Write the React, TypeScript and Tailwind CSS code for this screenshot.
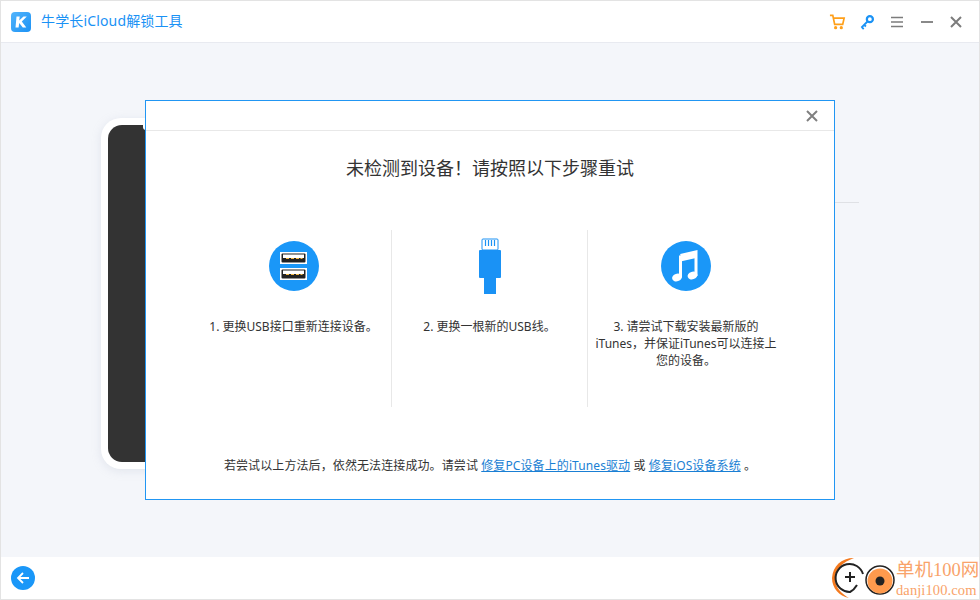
const font = "font-['Noto_Sans','Noto_Sans_CJK_SC',sans-serif]";

function Logo() {
  return (
    <svg width="20" height="20" viewBox="0 0 20 20">
      <defs>
        <linearGradient id="logoFill" x1="0" y1="0" x2="1" y2="1">
          <stop offset="0" stopColor="#52b4fb" />
          <stop offset="1" stopColor="#1c92f5" />
        </linearGradient>
      </defs>
      <rect width="20" height="20" rx="4" fill="url(#logoFill)" />
      <path d="M5.500 4.500h3.200L8.200 8.500 12.500 4.500h3.300l-5 5 4.500 6h-3.500L8.200 11l-.6 4.500H4.500z" fill="#fff" />
    </svg>
  );
}

function TitleIcons() {
  return (
    <div className="flex items-center">
      <svg width="17" height="18" viewBox="0 0 18 18" className="mr-[13px]" fill="none">
        <path d="M1 2h3l2 9.500h8.500L16 5H4.800" stroke="#ff9f18" strokeWidth="1.800" />
        <circle cx="7" cy="15" r="1.700" fill="#ff9f18" />
        <circle cx="13" cy="15" r="1.700" fill="#ff9f18" />
      </svg>
      <svg width="17" height="18" viewBox="0 0 18 18" className="mr-[14px]" fill="none">
        <circle cx="11.500" cy="6" r="3.200" stroke="#1a92f5" strokeWidth="2.400" />
        <path d="M9 8.500 2.500 15M3 14.500l2 2M5.500 12l1.800 1.800" stroke="#1a92f5" strokeWidth="2" />
      </svg>
      <svg width="14" height="14" viewBox="0 0 14 14" className="mr-[16px]">
        <path d="M1 2.500h12M1 7h12M1 11.500h12" stroke="#7c7c7c" strokeWidth="1.700" />
      </svg>
      <svg width="14" height="14" viewBox="0 0 14 14" className="mr-[15px]">
        <path d="M1 7h12" stroke="#7c7c7c" strokeWidth="1.800" />
      </svg>
      <svg width="14" height="14" viewBox="0 0 14 14">
        <path d="M2 2l10 10M12 2 2 12" stroke="#7c7c7c" strokeWidth="2" />
      </svg>
    </div>
  );
}

function UsbPortIcon() {
  const slot = (y: number) => (
    <g key={y}>
      <rect x="11" y={y} width="27" height="12" fill="#fff" />
      <rect x="12.500" y={y + 1.500} width="24" height="9" rx="1" fill="#222" />
      <rect x="14" y={y + 2.500} width="21" height="3.500" fill="#fff" />
      <path d={`M17 ${y + 6.500}h3M22 ${y + 6.500}h3M27 ${y + 6.500}h3M31.500 ${y + 6.500}h2`} stroke="#f5b942" strokeWidth="1" />
    </g>
  );
  return (
    <svg width="50" height="50" viewBox="0 0 50 50">
      <circle cx="25" cy="25" r="25" fill="#1a97f8" />
      {slot(11)}
      {slot(27)}
    </svg>
  );
}

function LightningIcon() {
  return (
    <svg width="24" height="56" viewBox="0 0 24 56" fill="none">
      <rect x="4" y="1" width="16" height="11" stroke="#1a92f5" strokeWidth="1" rx="1" />
      <path d="M7.500 2v6M10.500 2v6M13.500 2v6M16.500 2v6" stroke="#1a92f5" strokeWidth="1.200" />
      <rect x="1" y="12" width="22" height="28" rx="1" fill="#1a92f5" />
      <rect x="6" y="40" width="12" height="16" fill="#1a92f5" />
    </svg>
  );
}

function MusicIcon() {
  return (
    <svg width="50" height="50" viewBox="0 0 50 50">
      <circle cx="25" cy="25" r="25" fill="#1a97f8" />
      <path d="M19.500 14.500 35 11v24" stroke="#fff" strokeWidth="3" fill="none" />
      <path d="M19.500 14.500v22" stroke="#fff" strokeWidth="3" fill="none" />
      <path d="M19.500 15 35 11.500v5.500l-15.500 3.500z" fill="#fff" />
      <ellipse cx="16" cy="36.500" rx="5" ry="3.800" fill="#fff" transform="rotate(-18 16 36.500)" />
      <ellipse cx="31.500" cy="34.500" rx="5" ry="3.800" fill="#fff" transform="rotate(-18 31.500 34.500)" />
    </svg>
  );
}

function Watermark() {
  return (
    <svg width="66" height="43" viewBox="0 0 66 43" fill="none">
      <path d="M24 1C11 1 3 9 2 21c0 10 7 18 17 20-7-4-14-10-14-20C5 12 13 5 24 1z" fill="#f47a1f" />
      <path d="M27 28C24 33 20 35 20 35A14 14 0 1 1 33 17" stroke="#222" strokeWidth="2" />
      <path d="M15 20h10M20 15v10" stroke="#222" strokeWidth="2" />
      <circle cx="50" cy="23" r="14" stroke="#222" strokeWidth="1.500" />
      <circle cx="50" cy="24" r="12.500" fill="#ff9a4d" />
      <circle cx="50" cy="24" r="4.500" fill="#222" />
    </svg>
  );
}

const steps = [
  { icon: <UsbPortIcon />, lines: ["1. 更换USB接口重新连接设备。"] },
  { icon: <LightningIcon />, lines: ["2. 更换一根新的USB线。"] },
  {
    icon: <MusicIcon />,
    lines: ["3. 请尝试下载安装最新版的", "iTunes，并保证iTunes可以连接上", "您的设备。"],
  },
];

export default function App() {
  return (
    <div className={`${font} relative flex h-[600px] w-[980px] flex-col overflow-hidden border border-[#e3e3e3] bg-white`}>
      <header className="flex h-[42px] shrink-0 items-center justify-between border-b border-[#e8eaf0] pl-[10px] pr-[16px]">
        <div className="flex items-center gap-[10px]">
          <Logo />
          <span className="mb-[2px] text-[14px] tracking-[0.15px] text-[#1a92f5]">牛学长iCloud解锁工具</span>
        </div>
        <TitleIcons />
      </header>

      <main className="relative flex-1 overflow-hidden bg-[#f4f6fa]">
        <div className="ml-[100px] mt-[75px] h-[351px] w-[300px] rounded-[20px] bg-white p-[7px] shadow-[0_2px_10px_rgba(170,180,200,0.25)]">
          <div className="relative h-full w-full rounded-[14px] bg-[#333333]">
            <div className="absolute left-[35px] top-0 h-[5px] w-[10px] rounded-bl-[3px] bg-white" />
          </div>
        </div>
        <div className="absolute left-[700px] top-[159px] h-px w-[158px] bg-[#dfe1e5]" />

        <div className="absolute left-[144px] top-[57px] flex h-[400px] w-[690px] flex-col border border-[#2196f3] bg-white">
          <div className="flex h-[30px] shrink-0 items-center justify-end border-b border-[#e8e8e8] pr-[15px]">
            <svg width="14" height="14" viewBox="0 0 14 14">
              <path d="M2 2l10 10M12 2 2 12" stroke="#808080" strokeWidth="2" />
            </svg>
          </div>
          <h1 className="mt-[23px] text-center text-[18px] leading-[28px] text-[#333]">
            未检测到设备！请按照以下步骤重试
          </h1>
          <div className="mt-[48px] flex px-[50px]">
            {steps.map((step, index) => (
              <div
                key={index}
                className={`flex h-[177px] w-[196px] flex-col items-center ${index < 2 ? "border-r border-[#e8e8e8]" : ""}`}
              >
                <div className="mt-[8px] flex h-[56px] items-center justify-center">{step.icon}</div>
                <div className="mt-[24px] w-[190px] text-center text-[12px] leading-[17px] text-[#333]">
                  {step.lines.map((line) => (
                    <div key={line}>{line}</div>
                  ))}
                </div>
              </div>
            ))}
          </div>
          <p className="mt-[50px] text-center text-[12px] leading-[17px] tracking-[0.1px] text-[#333]">
            若尝试以上方法后，依然无法连接成功。请尝试{" "}
            <a className="text-[#1a7fd4] underline">修复PC设备上的iTunes驱动</a> 或{" "}
            <a className="text-[#1a7fd4] underline">修复iOS设备系统</a> 。
          </p>
        </div>
      </main>

      <footer className="relative flex h-[42px] shrink-0 items-center justify-between bg-white pl-[10px]">
        <div className="flex h-[24px] w-[24px] items-center justify-center rounded-full bg-[#1a97f8]">
          <svg width="14" height="14" viewBox="0 0 14 14" fill="none">
            <path d="M13 7H2M7 2 2 7l5 5" stroke="#fff" strokeWidth="1.800" />
          </svg>
        </div>
        <div className="absolute left-[829px] top-0 flex items-center bg-white">
          <Watermark />
        </div>
        <div className="absolute left-[895px] top-[2px] flex flex-col items-start whitespace-nowrap font-['Liberation_Serif','Noto_Sans_CJK_SC',serif] text-[#f9a36a]">
          <span className="text-[18.500px] leading-[23px]">单机100网</span>
          <span className="text-[14.500px] leading-[16px] tracking-[0.1px]">danji100.com</span>
        </div>
      </footer>
    </div>
  );
}
